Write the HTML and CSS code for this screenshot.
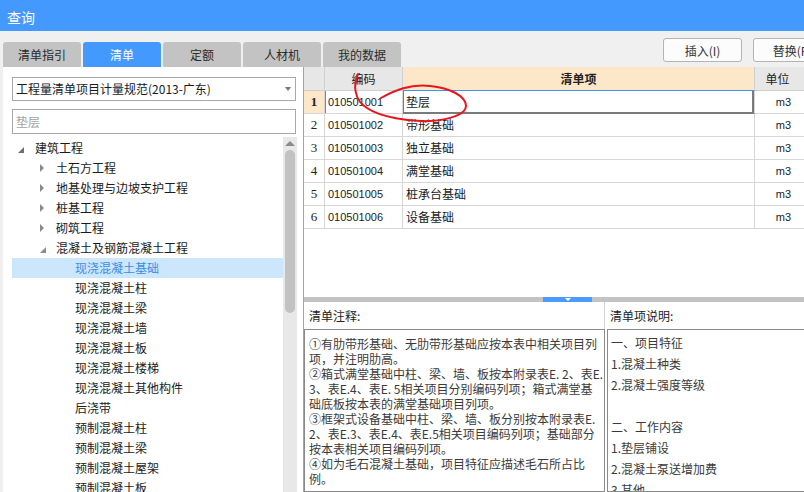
FILE: index.html
```html
<!DOCTYPE html>
<html lang="zh-CN">
<head>
<meta charset="utf-8">
<title>查询</title>
<link rel="stylesheet" href="styles.css">
</head>
<body>
<div class="window">
  <div class="titlebar">查询</div>
  <div class="toolbar">
    <div class="tabs">
      <div class="tab">清单指引</div>
      <div class="tab active">清单</div>
      <div class="tab">定额</div>
      <div class="tab">人材机</div>
      <div class="tab">我的数据</div>
    </div>
    <div class="actions">
      <button class="btn">插入(I)</button>
      <button class="btn">替换(R)</button>
    </div>
  </div>
  <div class="main">
    <div class="leftpane">
      <div class="select"><span>工程量清单项目计量规范(2013-广东)</span><span class="caret"></span></div>
      <div class="search">垫层</div>
      <div class="treewrap">
        <ul class="tree">
          <li class="lv1"><i class="tw open dark"></i>建筑工程</li>
          <li class="lv2"><i class="tw closed"></i>土石方工程</li>
          <li class="lv2"><i class="tw closed"></i>地基处理与边坡支护工程</li>
          <li class="lv2"><i class="tw closed"></i>桩基工程</li>
          <li class="lv2"><i class="tw closed"></i>砌筑工程</li>
          <li class="lv2"><i class="tw open"></i>混凝土及钢筋混凝土工程</li>
          <li class="lv3 sel">现浇混凝土基础</li>
          <li class="lv3">现浇混凝土柱</li>
          <li class="lv3">现浇混凝土梁</li>
          <li class="lv3">现浇混凝土墙</li>
          <li class="lv3">现浇混凝土板</li>
          <li class="lv3">现浇混凝土楼梯</li>
          <li class="lv3">现浇混凝土其他构件</li>
          <li class="lv3">后浇带</li>
          <li class="lv3">预制混凝土柱</li>
          <li class="lv3">预制混凝土梁</li>
          <li class="lv3">预制混凝土屋架</li>
          <li class="lv3">预制混凝土板</li>
        </ul>
        <div class="scrollbar"><span class="up"></span><div class="thumb"></div></div>
      </div>
    </div>
    <div class="rightpane">
      <div class="gridwrap">
        <div class="grid">
          <div class="c hd rn"></div>
          <div class="c hd code-h">编码</div>
          <div class="c hd name-h">清单项</div>
          <div class="c hd unit-h">单位</div>

          <div class="c rn cur">1</div>
          <div class="c code cur-row">010501001</div>
          <div class="c name active-cell">垫层</div>
          <div class="c unit">m3</div>

          <div class="c rn">2</div>
          <div class="c code">010501002</div>
          <div class="c name">带形基础</div>
          <div class="c unit">m3</div>

          <div class="c rn">3</div>
          <div class="c code">010501003</div>
          <div class="c name">独立基础</div>
          <div class="c unit">m3</div>

          <div class="c rn">4</div>
          <div class="c code">010501004</div>
          <div class="c name">满堂基础</div>
          <div class="c unit">m3</div>

          <div class="c rn">5</div>
          <div class="c code">010501005</div>
          <div class="c name">桩承台基础</div>
          <div class="c unit">m3</div>

          <div class="c rn">6</div>
          <div class="c code">010501006</div>
          <div class="c name">设备基础</div>
          <div class="c unit">m3</div>
        </div>
      </div>
      <div class="splitter"><span class="grip"><i class="grip-arrow"></i></span></div>
      <div class="notes">
        <div class="note-label first">清单注释:</div>
        <div class="note-label">清单项说明:</div>
        <div class="note-box comment">①有肋带形基础、无肋带形基础应按本表中相关项目列<br>项，并注明肋高。<br>②箱式满堂基础中柱、梁、墙、板按本附录表E. 2、表E.<br>3、表E.4、表E. 5相关项目分别编码列项；箱式满堂基<br>础底板按本表的满堂基础项目列项。<br>③框架式设备基础中柱、梁、墙、板分别按本附录表E.<br>2、表E.3、表E.4、表E.5相关项目编码列项；基础部分<br>按本表相关项目编码列项。<br>④如为毛石混凝土基础，项目特征应描述毛石所占比<br>例。</div>
        <div class="note-box desc">一、项目特征<br>1.混凝土种类<br>2.混凝土强度等级<br><br>二、工作内容<br>1.垫层铺设<br>2.混凝土泵送增加费<br>3.其他</div>
      </div>
      <svg class="annot" width="200" height="80" viewBox="0 0 200 80">
        <path d="M54,7 C49,18 50,33 63,41 C76,50 106,55 126,54 C146,53 162,47 162,39 C162,29 146,21 126,19 C106,17 91,23 77,31" fill="none" stroke="#e8151c" stroke-width="2" stroke-linecap="round"/>
      </svg>
    </div>
  </div>
</div>
</body>
</html>
```

FILE: styles.css
```css
* { box-sizing: border-box; }

body {
  margin: 0;
  background: #f0f0f0;
  font-family: "Noto Sans CJK SC", "Noto Sans", sans-serif;
  font-size: 12px;
  color: #1e1e1e;
}

.window {
  width: 804px;
  height: 492px;
  overflow: hidden;
  display: flex;
  flex-direction: column;
}

.titlebar {
  flex: none;
  height: 31px;
  background: #4499ff;
  color: #fff;
  font-size: 14px;
  line-height: 28px;
  padding: 3px 0 0 7px;
}

.toolbar {
  flex: none;
  height: 36px;
  display: flex;
  justify-content: space-between;
}

.tabs {
  display: flex;
  gap: 2px;
  padding-left: 3px;
  align-self: flex-end;
}

.tab {
  width: 78px;
  height: 25px;
  line-height: 26px;
  text-align: center;
  background: #c3c3c3;
  color: #2a2a2a;
  border-radius: 3px 3px 0 0;
}

.tab.active {
  background: #4499ff;
  color: #fff;
}

.actions {
  display: flex;
  gap: 11px;
  margin-top: 7px;
  margin-right: -28px;
  align-self: flex-start;
}

.btn {
  width: 79px;
  height: 24px;
  padding: 0;
  border: 1px solid #b4b4b4;
  border-radius: 3px;
  background: #fcfcfc;
  color: #333;
  font: 12px "Noto Sans CJK SC", sans-serif;
}

.main {
  flex: 1;
  min-height: 0;
  display: flex;
}

/* left pane */
.leftpane {
  width: 300px;
  margin-left: 3px;
  background: #fff;
  padding: 10px 6px 0 9px;
  display: flex;
  flex-direction: column;
}

.select {
  height: 24px;
  margin-right: 1px;
  border: 1px solid #a8a8a8;
  padding: 0 4px 0 3px;
  display: flex;
  align-items: center;
  justify-content: space-between;
  color: #1a1a1a;
  line-height: 22px;
}

.caret {
  width: 0;
  height: 0;
  border-top: 4px solid #777;
  border-left: 3px solid transparent;
  border-right: 3px solid transparent;
}

.search {
  height: 25px;
  margin-top: 8px;
  margin-right: 1px;
  border: 1px solid #a8a8a8;
  padding-left: 3px;
  line-height: 23px;
  color: #a3a3a3;
}

.treewrap {
  flex: 1;
  min-height: 0;
  margin-top: 3px;
  display: flex;
  overflow: hidden;
}

.tree {
  flex: 1;
  list-style: none;
  margin: 0;
  padding: 1px 0 0;
}

.tree li {
  height: 20px;
  line-height: 20px;
  display: flex;
  align-items: center;
  white-space: nowrap;
  color: #1a1a1a;
}

.tree .lv1 { padding-left: 6px; }
.tree .lv2 { padding-left: 27px; }
.tree .lv3 { padding-left: 63px; }

.tree li.sel {
  background: #cce6fc;
  color: #3a8de6;
}

.tw {
  flex: none;
  width: 17px;
  height: 20px;
  display: flex;
  align-items: center;
}

.tw.open::before {
  content: "";
  margin: 3px 0 0 1px;
  width: 0;
  height: 0;
  border-left: 6px solid transparent;
  border-bottom: 6px solid #8c8c8c;
}

.tw.open.dark::before {
  margin-left: 0;
  border-bottom-color: #6f6f6f;
}

.tw.closed::before {
  content: "";
  margin-left: 1px;
  width: 0;
  height: 0;
  border-left: 4px solid #8a8a8a;
  border-top: 4px solid transparent;
  border-bottom: 4px solid transparent;
}

.scrollbar {
  flex: none;
  width: 14px;
  background: #e8e8e8;
  display: flex;
  flex-direction: column;
  align-items: center;
}

.up {
  margin-top: 4px;
  width: 0;
  height: 0;
  border-bottom: 5px solid #8a8a8a;
  border-left: 5px solid transparent;
  border-right: 5px solid transparent;
}

.thumb {
  margin-top: 4px;
  width: 10px;
  height: 163px;
  border-radius: 5px;
  background: #c2c2c2;
}

/* right pane */
.rightpane {
  flex: 1;
  min-width: 0;
  position: relative;
  border-left: 1px solid #a4a4a4;
  background: #fff;
  display: flex;
  flex-direction: column;
  overflow: hidden;
}

.gridwrap {
  flex: none;
  height: 230px;
  overflow: hidden;
}

.grid {
  display: grid;
  grid-template-columns: 21px 78px 352px 58px;
  grid-template-rows: 24px repeat(6, 23px);
}

.c {
  border-right: 1px solid #d6d6d6;
  border-bottom: 1px solid #d6d6d6;
  line-height: 22px;
  white-space: nowrap;
  overflow: hidden;
}

.hd {
  background: #e7e7e7;
  line-height: 23px;
  text-align: center;
  color: #222;
  border-color: #d0d0d0;
}

.name-h {
  background: #fde7c9;
  font-weight: bold;
  border-bottom-color: #3d94f5;
}

.unit-h { padding-right: 12px; }

.rn {
  text-align: center;
  font-family: "Liberation Serif", serif;
  font-size: 13px;
  color: #222;
}

.rn.cur {
  background: #fde7c9;
  font-weight: bold;
}

.code {
  padding-left: 3px;
  font-family: "Liberation Sans", sans-serif;
  font-size: 11px;
  color: #222;
}

.cur-row { box-shadow: inset 1px 0 0 #3d94f5; }

.name {
  padding-left: 3px;
  color: #1a1a1a;
}

.active-cell {
  border-bottom-color: #7a7a7a;
  box-shadow: inset 1px 0 0 #7a7a7a, inset -2px -1px 0 #7a7a7a;
}

.unit {
  text-align: center;
  font-family: "Liberation Sans", sans-serif;
  font-size: 11px;
  color: #222;
}

.splitter {
  flex: none;
  height: 5px;
  background: #c3c3c3;
  display: flex;
}

.grip {
  margin-left: 239px;
  width: 49px;
  background: #4a9bff;
  display: flex;
  justify-content: center;
  align-items: center;
}

.grip-arrow {
  width: 0;
  height: 0;
  border-top: 3px solid #fff;
  border-left: 3px solid transparent;
  border-right: 3px solid transparent;
}

.notes {
  flex: 1;
  min-height: 0;
  display: grid;
  grid-template-columns: 301px 1fr;
  grid-template-rows: 27px 1fr;
}

.note-label {
  padding: 1px 0 0 5px;
  line-height: 26px;
  color: #222;
}

.note-label.first { border-right: 1px solid #d4d4d4; }

.note-box {
  border: 1px solid #8a8a8a;
  white-space: nowrap;
  overflow: hidden;
  color: #3a3a3a;
}

.comment {
  padding: 6px 4px 0 4px;
  line-height: 15px;
}

.desc {
  margin-left: 2px;
  border-right: none;
  padding: 2px 0 0 3px;
  line-height: 21px;
}

.annot {
  position: absolute;
  left: 0;
  top: 0;
  pointer-events: none;
}
```
